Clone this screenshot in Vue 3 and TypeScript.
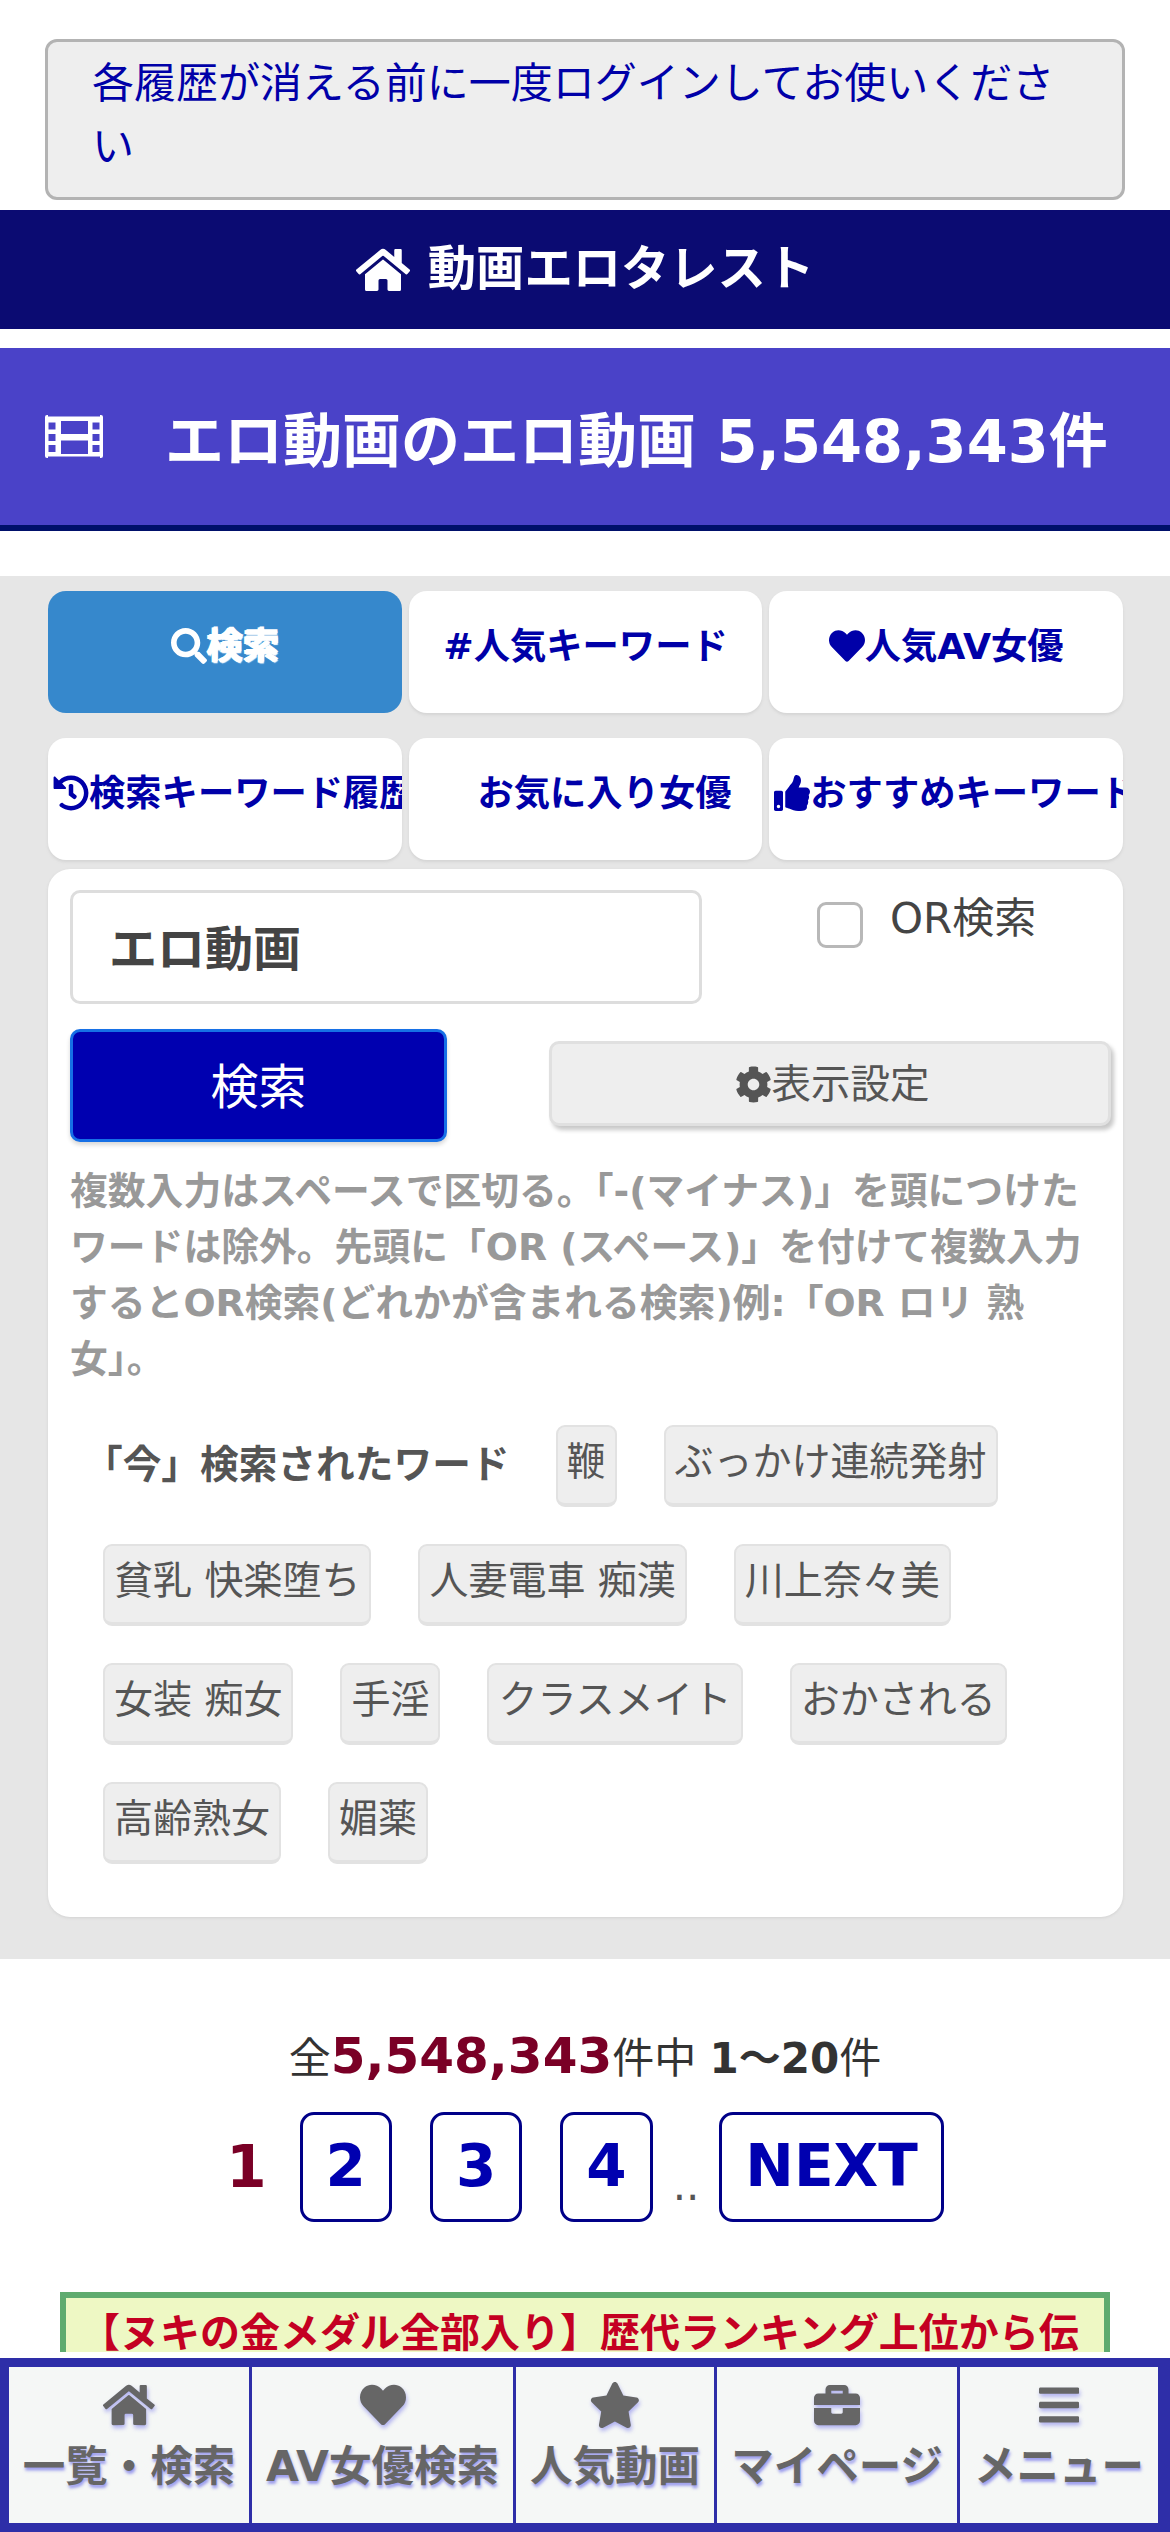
<script setup lang="ts">
const paths: Record<string, { vb: string; d: string }> = {
  home: { vb: '0 0 576 512', d: 'M280.37 148.26L96 300.11V464a16 16 0 0 0 16 16l112.06-.29a16 16 0 0 0 15.92-16V368a16 16 0 0 1 16-16h64a16 16 0 0 1 16 16v95.64a16 16 0 0 0 16 16.05L464 480a16 16 0 0 0 16-16V300L295.67 148.26a12.19 12.19 0 0 0-15.3 0zM571.6 251.47L488 182.56V44.05a12 12 0 0 0-12-12h-56a12 12 0 0 0-12 12v72.61L318.47 43a48 48 0 0 0-61 0L4.34 251.47a12 12 0 0 0-1.6 16.9l25.5 31A12 12 0 0 0 45.15 301l235.22-193.74a12.19 12.19 0 0 1 15.3 0L530.9 301a12 12 0 0 0 16.9-1.6l25.5-31a12 12 0 0 0-1.7-16.93z' },
  heart: { vb: '0 0 512 512', d: 'M462.3 62.6C407.5 15.9 326 24.3 275.7 76.2L256 96.5l-19.7-20.3C186.1 24.3 104.5 15.9 49.7 62.6c-62.8 53.6-66.1 149.8-9.9 207.9l193.5 199.8c12.5 12.9 32.8 12.9 45.3 0l193.5-199.8c56.3-58.1 53-154.3-9.8-207.9z' },
  star: { vb: '0 0 576 512', d: 'M259.3 17.8L194 150.2 47.9 171.5c-26.2 3.8-36.7 36.1-17.7 54.6l105.7 103-25 145.5c-4.5 26.3 23.2 46 46.4 33.7L288 439.6l130.7 68.7c23.2 12.2 50.9-7.4 46.4-33.7l-25-145.5 105.7-103c19-18.5 8.5-50.8-17.7-54.6L382 150.2 316.7 17.8c-11.7-23.6-45.6-23.9-57.4 0z' },
  briefcase: { vb: '0 0 512 512', d: 'M320 336c0 8.84-7.16 16-16 16h-96c-8.84 0-16-7.16-16-16v-48H0v144c0 25.6 22.4 48 48 48h416c25.6 0 48-22.4 48-48V288H320v48zm144-208h-80V80c0-25.6-22.4-48-48-48H176c-25.6 0-48 22.4-48 48v48H48c-25.6 0-48 22.4-48 48v80h512v-80c0-25.6-22.4-48-48-48zm-144 0H192V96h128v32z' },
  bars: { vb: '0 0 448 512', d: 'M16 132h416c8.837 0 16-7.163 16-16V76c0-8.837-7.163-16-16-16H16C7.163 60 0 67.163 0 76v40c0 8.837 7.163 16 16 16zm0 160h416c8.837 0 16-7.163 16-16v-40c0-8.837-7.163-16-16-16H16c-8.837 0-16 7.163-16 16v40c0 8.837 7.163 16 16 16zm0 160h416c8.837 0 16-7.163 16-16v-40c0-8.837-7.163-16-16-16H16c-8.837 0-16 7.163-16 16v40c0 8.837 7.163 16 16 16z' },
  search: { vb: '0 0 512 512', d: 'M505 442.7L405.3 343c-4.5-4.5-10.6-7-17-7H372c27.6-35.3 44-79.7 44-128C416 93.1 322.9 0 208 0S0 93.1 0 208s93.1 208 208 208c48.3 0 92.7-16.4 128-44v16.3c0 6.4 2.5 12.5 7 17l99.7 99.7c9.4 9.4 24.6 9.4 33.9 0l28.3-28.3c9.4-9.4 9.4-24.6.1-34zM208 336c-70.7 0-128-57.2-128-128 0-70.7 57.2-128 128-128 70.7 0 128 57.2 128 128 0 70.7-57.2 128-128 128z' },
  history: { vb: '0 0 512 512', d: 'M504 255.531c.253 136.64-111.18 248.372-247.82 248.468-59.015.042-113.223-20.53-155.822-54.911-11.077-8.94-11.905-25.541-1.839-35.607l11.267-11.267c8.609-8.609 22.353-9.551 31.891-1.984C173.062 425.135 212.781 440 256 440c101.705 0 184-82.311 184-184 0-101.705-82.311-184-184-184-48.814 0-93.149 18.969-126.068 49.932l50.754 50.754c10.08 10.08 2.941 27.314-11.313 27.314H24c-8.837 0-16-7.163-16-16V38.627c0-14.254 17.234-21.393 27.314-11.314l49.372 49.372C129.209 34.136 189.552 8 256 8c136.81 0 247.747 110.78 248 247.531zm-180.912 78.784l9.823-12.63c8.138-10.463 6.253-25.542-4.21-33.679L288 256.349V152c0-13.255-10.745-24-24-24h-16c-13.255 0-24 10.745-24 24v135.651l65.409 50.874c10.463 8.137 25.541 6.253 33.679-4.21z' },
  thumb: { vb: '0 0 512 512', d: 'M104 224H24c-13.255 0-24 10.745-24 24v240c0 13.255 10.745 24 24 24h80c13.255 0 24-10.745 24-24V248c0-13.255-10.745-24-24-24zM64 472c-13.255 0-24-10.745-24-24s10.745-24 24-24 24 10.745 24 24-10.745 24-24 24zM384 81.452c0 42.416-25.97 66.208-33.277 94.548h101.723c33.397 0 59.397 27.746 59.553 58.098.084 17.938-7.546 37.249-19.439 49.197l-.11.11c9.836 23.337 8.237 56.037-9.308 79.469 8.681 25.895-.069 57.704-16.382 74.757 4.298 17.598 2.244 32.575-6.148 44.632C440.202 511.587 389.616 512 346.839 512l-2.845-.001c-48.287-.017-87.806-17.598-119.56-31.725-15.957-7.099-36.821-15.887-52.651-16.178-6.54-.12-11.783-5.457-11.783-11.998v-213.77c0-3.2 1.282-6.271 3.558-8.521 39.614-39.144 56.648-80.587 89.117-113.111 14.804-14.832 20.188-37.236 25.393-58.902C282.515 39.293 291.817 0 312 0c24 0 72 8 72 81.452z' },
  cog: { vb: '0 0 512 512', d: 'M487.4 315.7l-42.6-24.6c4.3-23.2 4.3-47 0-70.2l42.6-24.6c4.9-2.8 7.1-8.6 5.5-14-11.1-35.6-30-67.8-54.7-94.6-3.8-4.1-10-5.1-14.8-2.3L380.8 110c-17.9-15.4-38.5-27.3-60.8-35.1V25.8c0-5.6-3.9-10.5-9.4-11.7-36.7-8.2-74.3-7.8-109.2 0-5.5 1.2-9.4 6.1-9.4 11.7V75c-22.2 7.9-42.8 19.8-60.8 35.1L88.7 85.5c-4.9-2.8-11-1.9-14.8 2.3-24.7 26.7-43.6 58.9-54.7 94.6-1.7 5.4.6 11.2 5.5 14L67.3 221c-4.3 23.2-4.3 47 0 70.2l-42.6 24.6c-4.9 2.8-7.1 8.6-5.5 14 11.1 35.6 30 67.8 54.7 94.6 3.8 4.1 10 5.1 14.8 2.3l42.6-24.6c17.9 15.4 38.5 27.3 60.8 35.1v49.2c0 5.6 3.9 10.5 9.4 11.7 36.7 8.2 74.3 7.8 109.2 0 5.5-1.2 9.4-6.1 9.4-11.7v-49.2c22.2-7.9 42.8-19.8 60.8-35.1l42.6 24.6c4.9 2.8 11 1.9 14.8-2.3 24.7-26.7 43.6-58.9 54.7-94.6 1.5-5.5-.7-11.3-5.6-14.1zM256 336c-44.1 0-80-35.9-80-80s35.9-80 80-80 80 35.9 80 80-35.9 80-80 80z' },
}

const tabs = [
  { icon: 'search', label: '検索', active: true },
  { icon: '', label: '#人気キーワード' },
  { icon: 'heart', label: '人気AV女優' },
  { icon: 'history', label: '検索キーワード履歴' },
  { icon: 'blank', label: 'お気に入り女優' },
  { icon: 'thumb', label: 'おすすめキーワード' },
]

const tags = ['鞭', 'ぶっかけ連続発射', '貧乳 快楽堕ち', '人妻電車 痴漢', '川上奈々美', '女装 痴女', '手淫', 'クラスメイト', 'おかされる', '高齢熟女', '媚薬']

const navItems = [
  { icon: 'home', label: '一覧・検索' },
  { icon: 'heart', label: 'AV女優検索' },
  { icon: 'star', label: '人気動画' },
  { icon: 'briefcase', label: 'マイページ' },
  { icon: 'bars', label: 'メニュー' },
]
</script>

<template>
  <div class="page">
    <main class="content">
      <div class="notice">各履歴が消える前に一度ログインしてお使いください</div>

      <header class="site-bar">
        <svg class="ico home-ico" :viewBox="paths.home.vb"><path :d="paths.home.d" /></svg>
        <span class="site-name">動画エロタレスト</span>
      </header>

      <h1 class="title-bar">
        <svg class="film" viewBox="0 0 58 43">
          <path fill-rule="evenodd" d="M0 2a2 2 0 0 1 2-2h1v1.5h52V0h1a2 2 0 0 1 2 2v39a2 2 0 0 1-2 2h-1v-1.500H3V43H2a2 2 0 0 1-2-2zM3.500 7.500h7v7h-7zM3.500 19h7v7h-7zM3.500 30h7v7h-7zM47.500 7.500h7v7h-7zM47.500 19h7v7h-7zM47.500 30h7v7h-7zM16 6h27v13H16zM16 25.500h27V39H16z" />
        </svg>
        <span>エロ動画のエロ動画 5,548,343件</span>
      </h1>

      <section class="search-section">
        <div class="tabs">
          <div v-for="t in tabs" :key="t.label" class="tab" :class="{ active: t.active }">
            <span v-if="t.icon === 'blank'" class="ico-blank"></span>
            <svg v-else-if="t.icon" class="ico tab-ico" :viewBox="paths[t.icon].vb"><path :d="paths[t.icon].d" /></svg>{{ t.label }}
          </div>
        </div>

        <div class="card">
          <div class="query-row">
            <div class="input">エロ動画</div>
            <span class="checkbox"></span>
            <span class="or-label">OR検索</span>
          </div>
          <div class="button-row">
            <button class="btn-search">検索</button>
            <button class="btn-settings">
              <svg class="ico" :viewBox="paths.cog.vb"><path :d="paths.cog.d" /></svg>表示設定
            </button>
          </div>
          <p class="note">複数入力はスペースで区切る。「-(マイナス)」を頭につけたワードは除外。先頭に「OR (スペース)」を付けて複数入力するとOR検索(どれかが含まれる検索)例:「OR ロリ 熟女」。</p>
          <div class="tag-list">
            <b class="tag-head">「今」検索されたワード</b>
            <span v-for="t in tags" :key="t" class="tag">{{ t }}</span>
          </div>
        </div>
      </section>

      <p class="count">全<b class="count-num">5,548,343</b>件中 <b>1〜20</b>件</p>

      <nav class="pager">
        <span class="current">1</span>
        <a class="page-btn">2</a>
        <a class="page-btn">3</a>
        <a class="page-btn">4</a>
        <span class="dots">..</span>
        <a class="page-btn">NEXT</a>
      </nav>

      <div class="banner">【ヌキの金メダル全部入り】歴代ランキング上位から伝</div>
    </main>

    <footer class="footer">
      <div class="bottom-nav">
        <div v-for="n in navItems" :key="n.label" class="nav-cell">
          <svg class="ico nav-ico" :viewBox="paths[n.icon].vb"><path :d="paths[n.icon].d" /></svg>
          <span class="nav-label">{{ n.label }}</span>
        </div>
      </div>
    </footer>
  </div>
</template>

<style scoped>
.page {
  width: 1170px;
  height: 2532px;
  display: flex;
  flex-direction: column;
  overflow: hidden;
  background: #fff;
  font-family: "DejaVu Sans", "Noto Sans CJK JP", sans-serif;
  color: #444;
}
.content {
  flex: 1;
  min-height: 0;
  overflow: hidden;
  padding-top: 39px;
}
.ico {
  height: 1em;
  fill: currentColor;
  flex: none;
}
.notice {
  margin: 0 45px;
  padding: 10px 44px 19px;
  height: 161px;
  box-sizing: border-box;
  border: 3px solid #b3b3b3;
  border-radius: 12px;
  background: #eee;
  color: #0000a8;
  font-size: 42px;
  line-height: 63px;
}
.site-bar {
  margin-top: 10px;
  height: 119px;
  background: #0b0b72;
  color: #fff;
  font-size: 48px;
  font-weight: 700;
  display: flex;
  align-items: center;
  justify-content: center;
  gap: 18px;
}
.home-ico {
  width: 54px;
}
.site-name {
  position: relative;
  top: -6px;
  font-size: 48.3px;
}
.title-bar {
  margin: 19px 0 0;
  height: 183px;
  box-sizing: border-box;
  padding-left: 45px;
  background: #4a42c8;
  border-bottom: 6px solid #00106a;
  color: #fff;
  font-size: 59px;
  font-weight: 700;
  display: flex;
  align-items: center;
  gap: 62px;
  white-space: nowrap;
}
.film {
  width: 58px;
  height: 43px;
  fill: #fff;
  flex: none;
}
.search-section {
  margin-top: 45px;
  padding: 15px 47px 42px 48px;
  background: #e6e6e6;
}
.tabs {
  display: grid;
  grid-template-columns: repeat(3, 1fr);
  gap: 25px 7px;
}
.tab {
  height: 122px;
  box-sizing: border-box;
  padding: 33px 5px 0;
  border-radius: 18px;
  background: #fff;
  box-shadow: 0 2px 3px #d4d4d4;
  color: #0000a8;
  font-size: 36.3px;
  line-height: 45px;
  font-weight: 700;
  text-align: center;
  white-space: nowrap;
  overflow: hidden;
}
.tab.active {
  background: #3688cc;
  color: #fff;
  text-shadow: 1px 1px 1px #fff, -1px 0 0 #fff, 1px -1px 0 #fff;
  box-shadow: none;
}
.tab-ico {
  width: 36px;
  height: 36px;
  vertical-align: -5px;
}
.ico-blank {
  display: inline-block;
  width: 38px;
}
.card {
  margin-top: 9px;
  padding: 21px 22px 53px;
  background: #fff;
  border-radius: 22px;
  box-shadow: 0 1px 3px #d2d2d2;
}
.query-row {
  display: flex;
  align-items: flex-start;
}
.input {
  width: 632px;
  height: 114px;
  box-sizing: border-box;
  border: 3px solid #ddd;
  border-radius: 10px;
  padding-left: 36px;
  font-size: 48px;
  font-weight: 700;
  line-height: 113px;
  color: #444;
}
.checkbox {
  width: 46px;
  height: 46px;
  box-sizing: border-box;
  margin: 12px 27px 0 115px;
  border: 3px solid #b8b8b8;
  border-radius: 9px;
}
.or-label {
  font-size: 42px;
  line-height: 58px;
}
.button-row {
  display: flex;
  align-items: center;
  justify-content: space-between;
  margin: 25px -10px 0 0;
}
.btn-search {
  width: 377px;
  height: 113px;
  padding: 0 0 6px;
  border: 3px solid #1670e6;
  border-radius: 10px;
  background: #0000b0;
  color: #fff;
  font: inherit;
  font-size: 48px;
  box-shadow: 0 3px 4px #d8d8d8;
}
.btn-settings {
  width: 562px;
  height: 85px;
  position: relative;
  top: -2px;
  padding: 0 0 6px 4px;
  border: 3px solid #e0e0e0;
  border-radius: 10px;
  background: #eee;
  color: #555;
  font: inherit;
  font-size: 39.5px;
  box-shadow: 3px 4px 4px #c8c8c8;
}
.btn-settings .ico {
  width: 37px;
  height: 39px;
  vertical-align: -6px;
}
.note {
  margin: 21px 0 0;
  font-size: 37.8px;
  line-height: 56px;
  font-weight: 700;
  color: #999;
}
.tag-list {
  margin-top: 38px;
  padding-left: 14px;
  display: flex;
  flex-wrap: wrap;
  align-items: center;
  row-gap: 37px;
}
.tag-head {
  font-size: 38.7px;
  color: #555;
  margin-right: 27px;
  position: relative;
  top: -5px;
}
.tag {
  height: 82px;
  box-sizing: border-box;
  margin: 0 28px 0 19px;
  padding: 6px 9px 0;
  border: 2px solid #e2e2e2;
  border-bottom-width: 4px;
  border-radius: 9px;
  background: #eee;
  color: #555;
  font-size: 39px;
  line-height: 58px;
  white-space: pre;
}
.count {
  margin: 67px 0 0;
  text-align: center;
  font-size: 42px;
  line-height: 60px;
  color: #333;
}
.count-num {
  font-size: 50px;
  color: #7a0026;
}
.pager {
  margin-top: 23px;
  display: flex;
  justify-content: center;
  align-items: center;
  height: 110px;
  font-size: 58px;
  font-weight: 700;
}
.current {
  color: #7a0026;
  margin-right: 33px;
}
.page-btn {
  height: 110px;
  box-sizing: border-box;
  padding: 0 23px;
  margin-right: 38px;
  border: 3px solid #000088;
  border-radius: 14px;
  color: #0000b0;
  line-height: 102px;
}
.dots {
  font-size: 42px;
  font-weight: 400;
  color: #555;
  margin: 36px 20px 0 -18px;
}
.page-btn:last-child {
  margin-right: 0;
}
.banner {
  margin: 70px 60px 0;
  padding: 8px 14px 120px;
  border: 6px solid #5fab6f;
  background: #eef8c4;
  color: #c40022;
  font-size: 40px;
  line-height: 54px;
  font-weight: 700;
  white-space: nowrap;
}
.footer {
  flex: none;
  padding-top: 6px;
  background: #fff;
}
.bottom-nav {
  display: grid;
  grid-template-columns: 240fr 261fr 198fr 240fr 198fr;
  gap: 3px;
  padding: 9px 12px 9px 9px;
  background: #2e2ea8;
  height: 174px;
  box-sizing: border-box;
}
.nav-cell {
  background: #f5f7f6;
  display: flex;
  flex-direction: column;
  align-items: center;
  padding-top: 15px;
  color: #666;
  white-space: nowrap;
}
.nav-ico {
  height: 46px;
  filter: drop-shadow(1px 3px 2px rgba(70, 70, 230, 0.4));
}
.nav-label {
  margin-top: 16px;
  font-size: 42.5px;
  line-height: 46px;
  font-weight: 700;
  text-shadow: 1px 3px 3px rgba(70, 70, 230, 0.5);
}
</style>
